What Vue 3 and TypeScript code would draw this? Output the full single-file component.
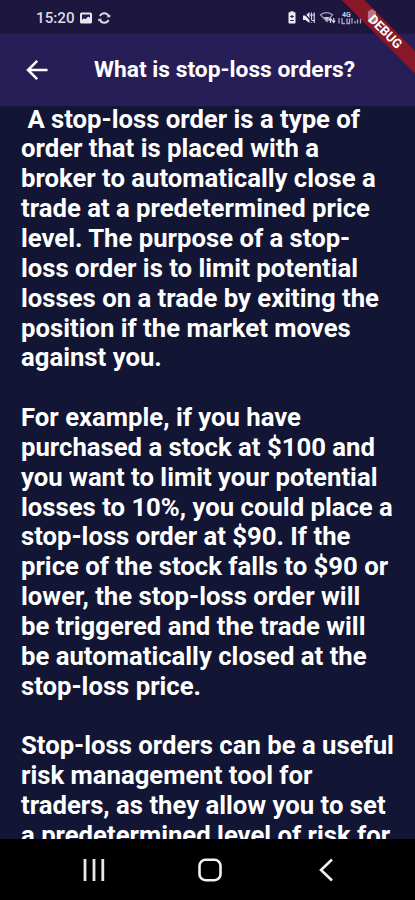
<script setup lang="ts">
const paragraphs: string[][] = [
  [
    '\u00a0A stop-loss order is a type of',
    'order that is placed with a',
    'broker to automatically close a',
    'trade at a predetermined price',
    'level. The purpose of a stop-',
    'loss order is to limit potential',
    'losses on a trade by exiting the',
    'position if the market moves',
    'against you.',
  ],
  [
    'For example, if you have',
    'purchased a stock at $100 and',
    'you want to limit your potential',
    'losses to 10%, you could place a',
    'stop-loss order at $90. If the',
    'price of the stock falls to $90 or',
    'lower, the stop-loss order will',
    'be triggered and the trade will',
    'be automatically closed at the',
    'stop-loss price.',
  ],
  [
    'Stop-loss orders can be a useful',
    'risk management tool for',
    'traders, as they allow you to set',
    'a predetermined level of risk for',
  ],
]
</script>

<template>
  <div class="phone">
    <header class="status">
      <span class="clock">15:20</span>
      <svg class="left-icons" width="34" height="14" viewBox="0 0 34 14">
        <rect x="1" y="1.5" width="12" height="11" rx="1.5" fill="#e8e6f0" />
        <path d="M3 3.500h8v3.200L9.200 5.500 6.500 8.300 5 7.200 3 9z" fill="#211a47" />
        <path d="M21 5.200a4.600 4.600 0 0 1 8.600 0M29.600 8.800a4.600 4.600 0 0 1-8.600 0" fill="none" stroke="#dedbe9" stroke-width="1.900" />
        <path d="M27.300 6.300h4V3.500zM23.300 7.700h-4v2.800z" fill="#dedbe9" />
      </svg>
      <svg class="right-icons" width="94" height="16" viewBox="0 0 94 16">
        <g fill="#eceaf3">
          <path d="M3.500 2.300H4.500V1.200h3v1.100h1.200q.8 0 .8.800v9.600q0 .8-.8.800H3.300q-.8 0-.8-.8V3.100q0-.8.8-.8z" />
          <path d="M17 5.500h2.500l4-3.500v11l-4-3H17z" />
        </g>
        <path d="M4.200 6.500h3.600M6 5v3M4.200 10.500h3.600" stroke="#261e50" stroke-width="1.200" />
        <path d="M25.500 2.500v10.500M28.200 2.500v10.500M24 5h5M24 10.500h5" stroke="#d6d3e2" stroke-width="1.200" />
        <path d="M17 2l10 11" stroke="#211a47" stroke-width="1.200" />
        <path d="M34.500 4.800q6-4.300 12 0L41 11.500z" fill="none" stroke="#a5a1bc" stroke-width="1.200" />
        <path d="M37.500 7h6L41 10.700z" fill="#c9c6d8" />
        <path d="M44.500 13V8.500M47.700 8v4.500M43 10.500l1.500-2 1.500 2M46.200 10.500l1.500 2 1.500-2" fill="none" stroke="#d9d6e5" stroke-width="1.200" />
        <text x="56" y="6.800" class="net">4G</text>
        <path d="M53 8v5.500M56 8v5.500h3M61 8.500v5h2.500v-5M66 8v5.500M69 11v2.500M71.500 9.500v4M74.500 7v6.500" fill="none" stroke="#aaa6c0" stroke-width="1.300" />
        <path d="M80 5v8.500M82.500 3v10.500" stroke="#554b78" stroke-width="1.300" />
      </svg>
    </header>
    <nav class="appbar">
      <svg class="back" width="24" height="24" viewBox="0 0 24 24">
        <path d="M12.200 2.800L3 12l9.200 9.200M3.500 12H22.500" fill="none" stroke="#fff" stroke-width="2.500" />
      </svg>
      <h1>What is stop-loss orders?</h1>
    </nav>
    <main class="article">
      <p v-for="(lines, i) in paragraphs" :key="i">
        <span v-for="line in lines" :key="line" class="line">{{ line }}</span>
      </p>
    </main>
    <footer class="navbar">
      <svg width="24" height="24" viewBox="0 0 24 24">
        <path d="M3 1v22M12 1v22M20.800 1v22" stroke="#e9e9e9" stroke-width="2.800" />
      </svg>
      <svg width="24" height="24" viewBox="0 0 24 24">
        <rect x="1.500" y="1.800" width="21" height="20.400" rx="6" fill="none" stroke="#f2f2f2" stroke-width="2.600" />
      </svg>
      <svg width="24" height="24" viewBox="0 0 24 24">
        <path d="M18 1.500L7 12l11 10.500" fill="none" stroke="#f2f2f2" stroke-width="2.600" />
      </svg>
    </footer>
    <div class="banner">
      <svg class="banner-battery" width="10" height="13" viewBox="0 0 10 13">
        <path d="M1 2h2V.500h4V2h2v11H1z" fill="#d8b4bf" />
      </svg>
      <span class="banner-label">DEBUG</span>
    </div>
  </div>
</template>

<style>
body {
  margin: 0;
  background: #121634;
}
</style>

<style scoped>
.phone {
  position: relative;
  display: flex;
  flex-direction: column;
  width: 415px;
  height: 900px;
  overflow: hidden;
  background: #121634;
  color: #fff;
  font-family: Roboto, sans-serif;
}
.status {
  flex: none;
  display: flex;
  align-items: center;
  box-sizing: border-box;
  height: 34px;
  padding: 2px 35px 0 36px;
  background: #1d163f;
}
.clock {
  width: 38px;
  font-size: 15.2px;
  line-height: 18px;
  font-weight: 500;
  color: #dcd9e7;
}
.left-icons {
  margin-left: 5px;
}
.right-icons {
  margin-left: auto;
}
.net {
  font-size: 7px;
  font-weight: 700;
  fill: #cfcbdc;
}
.appbar {
  flex: none;
  display: flex;
  align-items: center;
  box-sizing: border-box;
  height: 72px;
  padding-left: 25px;
  background: #271e57;
}
h1 {
  margin: 0 0 0 45px;
  font-size: 22.8px;
  line-height: 28px;
  font-weight: 700;
  white-space: nowrap;
}
.article {
  flex: 1;
  min-height: 0;
  overflow: hidden;
  padding-left: 21px;
  font-size: 25.7px;
  line-height: 29.85px;
  font-weight: 700;
}
p {
  margin: 0 0 29.85px;
}
p:first-child {
  margin-top: -1.4px;
}
.line {
  display: block;
  white-space: pre;
}
.navbar {
  flex: none;
  display: flex;
  justify-content: space-between;
  box-sizing: border-box;
  height: 61px;
  padding: 19px 77px 0 82px;
  background: #000;
}
.banner {
  position: absolute;
  left: 325px;
  top: 24px;
  width: 120px;
  height: 16px;
  transform: rotate(45deg);
  background: #8a1728;
  text-align: center;
}
.banner-battery {
  position: absolute;
  left: 34px;
  top: -1px;
  transform: rotate(-45deg);
  opacity: 0.6;
}
.banner-label {
  position: relative;
  display: block;
  font-size: 13px;
  line-height: 16px;
  font-weight: 700;
}
</style>
